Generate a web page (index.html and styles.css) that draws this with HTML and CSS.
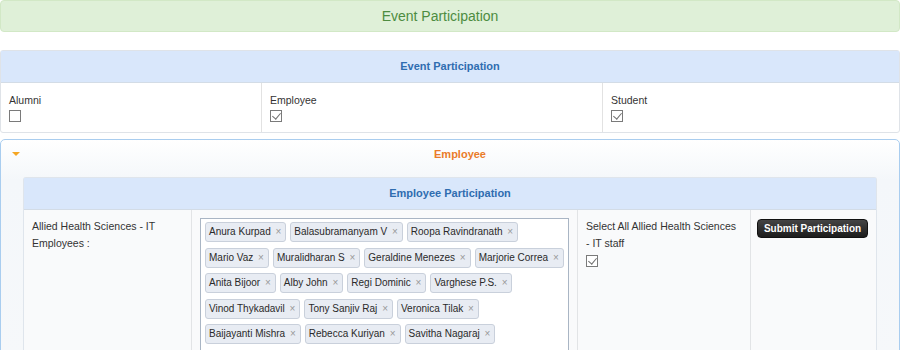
FILE: index.html
```html
<!DOCTYPE html>
<html>
<head>
	<title>Event Participation</title>
	<link rel="stylesheet" href="styles.css">
</head>
<body>
	<div class="banner">Event Participation</div>

	<div class="box">
		<div class="box-head">Event Participation</div>
		<div class="type-row">
			<div class="type-cell">
				<div>Alumni</div>
				<span class="check"></span>
			</div>
			<div class="type-cell">
				<div>Employee</div>
				<span class="check on"></span>
			</div>
			<div class="type-cell">
				<div>Student</div>
				<span class="check on"></span>
			</div>
		</div>
	</div>

	<div class="accordion">
		<div class="acc-head">
			<span class="arrow"></span>
			<span class="acc-title">Employee</span>
		</div>
		<div class="acc-body">
			<div class="box inner">
				<div class="box-head">Employee Participation</div>
				<div class="emp-row">
					<div class="emp-cell label">Allied Health Sciences - IT Employees :</div>
					<div class="emp-cell">
						<div class="tags">
							<span class="tag">Anura Kurpad <i>×</i></span>
							<span class="tag">Balasubramanyam V <i>×</i></span>
							<span class="tag">Roopa Ravindranath <i>×</i></span>
							<span class="tag">Mario Vaz <i>×</i></span>
							<span class="tag">Muralidharan S <i>×</i></span>
							<span class="tag">Geraldine Menezes <i>×</i></span>
							<span class="tag">Marjorie Correa <i>×</i></span>
							<span class="tag">Anita Bijoor <i>×</i></span>
							<span class="tag">Alby John <i>×</i></span>
							<span class="tag">Regi Dominic <i>×</i></span>
							<span class="tag">Varghese P.S. <i>×</i></span>
							<span class="tag">Vinod Thykadavil <i>×</i></span>
							<span class="tag">Tony Sanjiv Raj <i>×</i></span>
							<span class="tag">Veronica Tilak <i>×</i></span>
							<span class="tag">Baijayanti Mishra <i>×</i></span>
							<span class="tag">Rebecca Kuriyan <i>×</i></span>
							<span class="tag">Savitha Nagaraj <i>×</i></span>
						</div>
					</div>
					<div class="emp-cell">
						<div>Select All Allied Health Sciences - IT staff</div>
						<span class="check on"></span>
					</div>
					<div class="emp-cell btn-cell">
						<button class="submit">Submit Participation</button>
					</div>
				</div>
			</div>
		</div>
	</div>
</body>
</html>
```

FILE: styles.css
```css
body {
	margin: 0;
	background: #fff;
	font-family: "Liberation Sans", Arial, sans-serif;
	font-size: 10.5px;
	color: #333;
	height: 350px;
	overflow: hidden;
}

.banner {
	height: 30px;
	line-height: 30px;
	margin: 0 0 18px 0;
	padding-right: 20px;
	border: 1px solid #d2e8c6;
	border-radius: 4px;
	background: #dff0d8;
	color: #4d8c41;
	font-size: 14px;
	text-align: center;
}

.box {
	border: 1px solid #dfe3e8;
	border-radius: 3px;
	background: #fff;
}

.box-head {
	height: 31px;
	line-height: 31px;
	background: #d9e7fb;
	border-bottom: 1px solid #d3dce6;
	color: #2f6db0;
	font-weight: bold;
	font-size: 11px;
	text-align: center;
}

.type-row {
	display: grid;
	grid-template-columns: 260px 341px 1fr;
	height: 49px;
}

.type-cell {
	padding: 10px 8px 0 8px;
	border-left: 1px solid #e2e2e2;
	line-height: 14px;
}

.type-cell:first-child {
	border-left: none;
}

.check {
	display: inline-block;
	width: 10px;
	height: 10px;
	margin-top: 3px;
	border: 1px solid #7a7a7a;
	background: #fff;
	position: relative;
}

.check.on::after {
	content: "";
	position: absolute;
	left: 3px;
	top: 0px;
	width: 4px;
	height: 7px;
	border: solid #6f6f6f;
	border-width: 0 1px 1px 0;
	transform: rotate(40deg);
}

.accordion {
	margin-top: 6px;
	border: 1px solid #a9cdef;
	border-radius: 5px;
	background: linear-gradient(#fff, #f4f7fa 40px, #f6f8fa);
	height: 220px;
}

.acc-head {
	position: relative;
	height: 30px;
	line-height: 28px;
	padding-left: 20px;
	text-align: center;
}

.arrow {
	position: absolute;
	left: 11px;
	top: 12px;
	border-left: 4px solid transparent;
	border-right: 4px solid transparent;
	border-top: 4px solid #f5a623;
}

.acc-title {
	color: #ea7b2a;
	font-weight: bold;
	font-size: 11px;
}

.acc-body {
	padding: 7px 22px 0 22px;
}

.inner {
	border-color: #dfe5ec;
	border-bottom: none;
	background: #f9fafb;
}

.emp-row {
	display: grid;
	grid-template-columns: 167px 386px 173px 1fr;
	height: 150px;
}

.emp-cell {
	padding: 8px 8px 0 8px;
	border-left: 1px solid #e2e4e6;
	line-height: 17px;
}

.emp-cell:first-child {
	border-left: none;
}

.btn-cell {
	padding-left: 6px;
}

.tags {
	border: 1px solid #a9b5c4;
	background: #fff;
	padding: 3px 0 0 4px;
	height: 140px;
	display: flex;
	flex-wrap: wrap;
	align-content: flex-start;
	gap: 5.5px 4px;
}

.tag {
	height: 18px;
	line-height: 18px;
	padding: 0 4px 0 3px;
	border: 1px solid #c9d0db;
	border-radius: 3px;
	background: #e8ecf3;
	color: #2a2a2a;
	font-size: 10px;
	white-space: nowrap;
}

.tag i {
	font-style: normal;
	color: #999;
	font-size: 10px;
	margin-left: 2px;
}

.submit {
	font-family: "Liberation Sans", Arial, sans-serif;
	font-size: 10px;
	font-weight: bold;
	color: #fff;
	background: linear-gradient(#444, #1c1c1c);
	border: 1px solid #111;
	border-radius: 4px;
	padding: 0 5px;
	width: 111px;
	height: 19px;
	line-height: 17px;
	white-space: nowrap;
	margin-top: 1px;
}
```
